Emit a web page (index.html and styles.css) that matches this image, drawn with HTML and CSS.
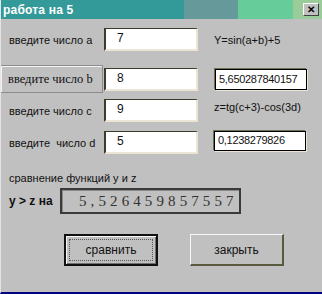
FILE: index.html
```html
<!DOCTYPE html>
<html lang="ru">
<head>
<meta charset="utf-8">
<title>работа на 5</title>
<link rel="stylesheet" href="styles.css">
</head>
<body>
<div class="window">
  <div class="titlebar">
    <span class="title">работа на 5</span>
    <span class="close">✕</span>
  </div>

  <div class="row row-a">
    <span class="label">введите число а</span>
    <div class="input">7</div>
    <span class="formula">Y=sin(a+b)+5</span>
  </div>

  <div class="row row-b">
    <span class="label label-box">введите число b</span>
    <div class="input">8</div>
    <div class="output out-y">5,650287840157</div>
  </div>

  <div class="row row-c">
    <span class="label">введите число с</span>
    <div class="input">9</div>
    <span class="formula formula-top">z=tg(c+3)-cos(3d)</span>
  </div>

  <div class="row row-d">
    <span class="label">введите &nbsp;число d</span>
    <div class="input">5</div>
    <div class="output out-z">0,1238279826</div>
  </div>

  <div class="compare-caption">сравнение функций у и z</div>

  <div class="result-row">
    <span class="result-label">у &gt; z на</span>
    <div class="result">5,526459857557</div>
  </div>

  <div class="buttons">
    <button class="btn btn-default"><span class="focus">сравнить</span></button>
    <button class="btn">закрыть</button>
  </div>
</div>
</body>
</html>
```

FILE: styles.css
```css
* { box-sizing: border-box; }

html, body {
  margin: 0;
  padding: 0;
  background: #c0c0c0;
}

body {
  font-family: "Liberation Sans", Arial, sans-serif;
  font-size: 11px;
  color: #111;
}

.window {
  width: 322px;
  height: 294px;
  background: #c0c0c0;
  border-left: 1px solid #e4e4e4;
  border-bottom: 2px solid #000080;
  display: flex;
  flex-direction: column;
  overflow: hidden;
}

.titlebar {
  height: 19px;
  margin-left: -1px;
  display: flex;
  align-items: center;
  background: linear-gradient(to right,
    #339999 0, #339999 184px,
    #669999 184px, #669999 238px,
    #66cc99 238px, #66cc99 293px,
    #99cc99 293px);
}

.title {
  color: #fff;
  font-weight: bold;
  font-size: 12px;
  padding-left: 3px;
  letter-spacing: 0.2px;
}

.close {
  margin-left: auto;
  margin-right: 3px;
  width: 16px;
  height: 13px;
  background: #c0c0c0;
  border-top: 1px solid #fff;
  border-left: 1px solid #fff;
  border-right: 1px solid #404040;
  border-bottom: 1px solid #404040;
  font-size: 10px;
  font-weight: bold;
  line-height: 11px;
  text-align: center;
  color: #000;
}

.row {
  display: grid;
  grid-template-columns: 103px 94px 1fr;
  align-items: center;
}

.row-a { margin-top: 9px; height: 23px; }
.row-b { margin-top: 14px; height: 28px; }
.row-c { margin-top: 6px; height: 23px; }
.row-d { margin-top: 9px; height: 23px; }

.label {
  padding-left: 8px;
  white-space: nowrap;
}

.label-box {
  height: 28px;
  margin-left: -1px;
  margin-right: 1px;
  padding-left: 7px;
  display: flex;
  align-items: center;
  font-family: "Liberation Serif", "Times New Roman", serif;
  font-size: 12.5px;
  border: 1px solid #8c8c8c;
  box-shadow: inset 1px 1px 0 #f4f4f4;
}

.input {
  height: 23px;
  background: #fff;
  border-top: 1px solid #3c3c28;
  border-left: 2px solid #3c3c28;
  border-right: 2px solid #ece4d4;
  border-bottom: 2px solid #ece4d4;
  padding-left: 11px;
  font-size: 12px;
  line-height: 19px;
  color: #111;
}

.formula {
  padding-left: 16px;
  white-space: nowrap;
}

.formula-top {
  align-self: start;
  margin-top: 2px;
}

.output {
  margin-left: 17px;
  width: 92px;
  background: #fff;
  border: 1px solid #000;
  box-shadow: -1px -1px 0 #6e6e50, 1px 1px 0 #ece4d4;
  font-size: 11px;
  letter-spacing: -0.3px;
  padding-left: 3px;
  white-space: nowrap;
  overflow: hidden;
}

.out-y { height: 21px; line-height: 18px; }
.out-z { height: 20px; line-height: 16px; margin-left: 16px; align-self: start; }

.compare-caption {
  margin-top: 17px;
  padding-left: 8px;
  line-height: 14px;
}

.result-row {
  margin-top: 3px;
  display: flex;
  align-items: center;
  height: 26px;
}

.result-label {
  width: 59px;
  padding-left: 8px;
  font-weight: bold;
  font-size: 12px;
  white-space: nowrap;
}

.result {
  width: 181px;
  height: 26px;
  border: 2px solid #3a3a3a;
  box-shadow: inset 1px 1px 0 #8a8a8a;
  padding-left: 17px;
  font-family: "Liberation Serif", "Times New Roman", serif;
  font-size: 15px;
  letter-spacing: 4.1px;
  line-height: 22px;
  color: #333;
  white-space: nowrap;
}

.buttons {
  margin-top: 20px;
  display: flex;
  gap: 32px;
  padding-left: 63px;
}

.btn {
  width: 94px;
  height: 32px;
  margin: 0;
  padding: 0;
  background: #c0c0c0;
  font-family: "Liberation Sans", Arial, sans-serif;
  font-size: 12px;
  color: #111;
  border-top: 1px solid #f8f8f8;
  border-left: 1px solid #f8f8f8;
  border-right: 2px solid #5a5a40;
  border-bottom: 2px solid #5a5a40;
}

.btn-default {
  border: 2px solid #111;
  box-shadow: inset 1px 1px 0 #f4f4f4, inset -1px -1px 0 #707070;
  padding: 3px;
}

.focus {
  display: flex;
  align-items: center;
  justify-content: center;
  height: 100%;
  border: 1px dotted #555;
}
```
